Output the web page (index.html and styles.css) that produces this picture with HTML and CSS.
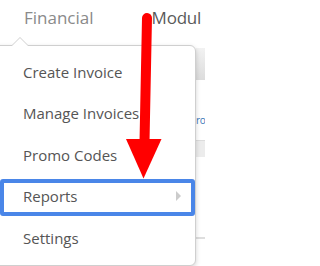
FILE: index.html
```html
<!DOCTYPE html>
<html>
<head>
<meta charset="utf-8">
<link rel="stylesheet" href="styles.css">
</head>
<body>
<div class="page">
  <nav class="topnav">
    <span class="nav-item nav-financial">Financial</span>
    <span class="nav-item nav-modules">Modul</span>
  </nav>
  <div class="content">
    <div class="content-head"></div>
    <div class="content-row"><span class="link">ro</span></div>
    <div class="content-band"></div>
    <div class="content-row tall"></div>
    <div class="content-line"></div>
  </div>

  <ul class="dropdown">
    <li class="menu-item">Create Invoice</li>
    <li class="menu-item">Manage Invoices</li>
    <li class="menu-item">Promo Codes</li>
    <li class="menu-item has-sub">Reports<span class="sub-caret"></span></li>
    <li class="menu-item">Settings</li>
  </ul>

  <div class="highlight"></div>
  <svg class="arrow" width="205" height="266" viewBox="0 0 205 266">
    <line x1="147" y1="18" x2="144.5" y2="142" stroke="#ff0000" stroke-width="10" stroke-linecap="round"/>
    <polygon points="126,139 161.5,139 143.5,178.5" fill="#ff0000"/>
  </svg>
</div>
</body>
</html>
```

FILE: styles.css
```css
* { box-sizing: border-box; }
html, body { margin: 0; padding: 0; background: #fff; }
body {
  font-family: "Open Sans", "DejaVu Sans", sans-serif;
}
.page {
  position: relative;
  width: 205px;
  height: 266px;
  overflow: hidden;
}
.topnav {
  display: flex;
  height: 48px;
  padding-top: 6px;
  white-space: nowrap;
}
.nav-item {
  font-size: 17px;
  line-height: 24px;
}
.nav-financial {
  color: #8a8a8a;
  margin-left: 24px;
}
.nav-modules {
  color: #5a5a5a;
  margin-left: 58px;
  letter-spacing: -0.2px;
}
.content {
  padding-left: 196px;
}
.content-head {
  height: 32px;
  background: linear-gradient(#f2f2f2, #dcdcdc);
}
.content-row {
  height: 60px;
  padding-top: 27px;
  white-space: nowrap;
}
.content-row.tall { height: 80px; }
.link {
  display: inline-block;
  font-size: 10px;
  line-height: 16px;
  letter-spacing: -0.3px;
  color: #3a78b8;
}
.content-band {
  height: 17px;
  background: #ececec;
  border-top: 1px solid #dcdcdc;
}
.content-line {
  height: 2px;
  background: #dedede;
}
.dropdown {
  position: absolute;
  left: -10px;
  top: 45px;
  width: 206px;
  height: 221px;
  margin: 0;
  padding: 5px 0 0 0;
  list-style: none;
  background: #fff;
  border: 1px solid #cfcfcf;
  border-radius: 6px;
  box-shadow: 0 2px 5px rgba(0, 0, 0, 0.18);
}
.dropdown::before {
  content: "";
  position: absolute;
  left: 20px;
  top: -9px;
  border-left: 9px solid transparent;
  border-right: 9px solid transparent;
  border-bottom: 9px solid #cfcfcf;
}
.dropdown::after {
  content: "";
  position: absolute;
  left: 21px;
  top: -8px;
  border-left: 8px solid transparent;
  border-right: 8px solid transparent;
  border-bottom: 8px solid #fff;
}
.menu-item {
  display: flex;
  align-items: center;
  justify-content: space-between;
  height: 41.5px;
  padding: 0 14px 0 32px;
  font-size: 15px;
  line-height: 20px;
  color: #555;
  white-space: nowrap;
}
.sub-caret {
  width: 0;
  height: 0;
  border-top: 5px solid transparent;
  border-bottom: 5px solid transparent;
  border-left: 5px solid #cccccc;
}
.highlight {
  position: absolute;
  left: 0;
  top: 179px;
  width: 195px;
  height: 37px;
  border: 4px solid #4a86e8;
  border-radius: 3px;
}
.arrow {
  position: absolute;
  left: 0;
  top: 0;
}
```
